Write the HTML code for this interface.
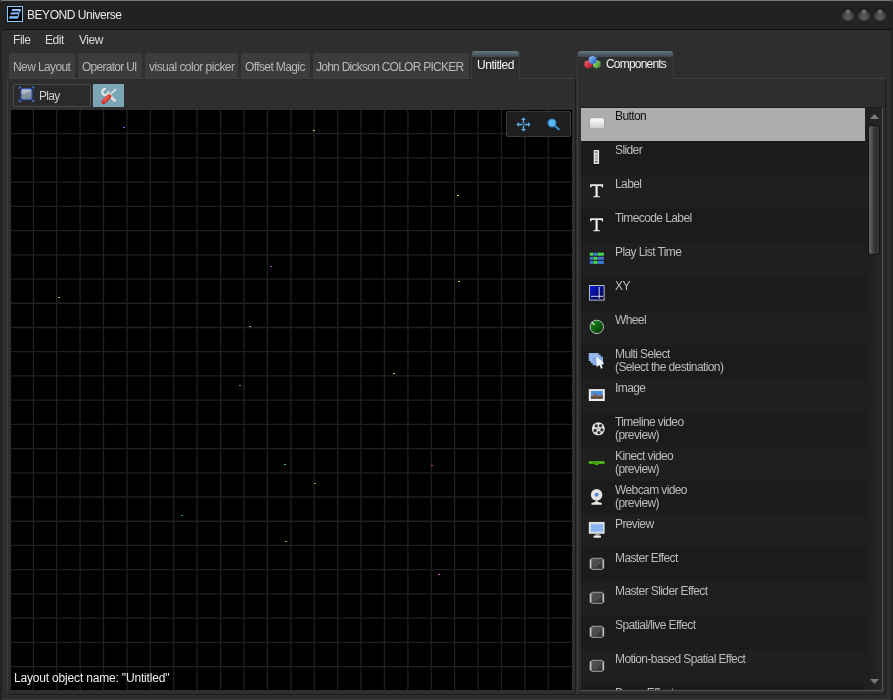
<!DOCTYPE html>
<html><head><meta charset="utf-8"><style>
*{margin:0;padding:0;box-sizing:border-box}
html,body{width:893px;height:700px;overflow:hidden;background:#222;font-family:"Liberation Sans",sans-serif}
.abs{position:absolute}
.sph{position:absolute;top:7px;width:14px;height:14px;border-radius:50%;background:radial-gradient(circle at 50% 32%,#8c8c8c 0,#6a6a6a 1.2px,rgba(50,50,50,0) 3px),radial-gradient(circle at 50% 68%,#5e5e5e 0,#4e4e4e 3.5px,#383838 6px,#1c1c1c 7px)}
.atab{position:absolute;top:51px;height:28px;background:#2e2e2e;border-radius:3px 3px 0 0;border-left:1px solid #3a3a3a;border-right:1px solid #3a3a3a}
.atab .strip{position:absolute;left:0;right:0;top:0;height:6px;border-radius:3px 3px 0 0;background:linear-gradient(#647780,#3c474c)}
</style></head><body>
<div class="abs" style="left:0;top:0;width:893px;height:30px;background:#222;border-top:1px solid #7a7a7a;border-radius:3px 3px 0 0"></div>
<div class="abs" style="left:7px;top:6px;width:16px;height:16px;background:#000;border:1px solid #8cc8f8"></div>
<svg class="abs" style="left:7px;top:6px" width="16" height="16" viewBox="0 0 16 16"><defs><linearGradient id="g3" x1="0" y1="0" x2="0" y2="1"><stop offset="0" stop-color="#b0dcff"/><stop offset="1" stop-color="#5a98e8"/></linearGradient></defs><g fill="url(#g3)"><path d="M5.2 3 H13.4 Q14.5 3.2 14 4.3 L13.6 5.2 H4.6 Z"/><path d="M3.9 6.6 H12.6 L12 8.6 H3.2 Z"/><path d="M2.6 10.2 H11.8 L11 12.8 H1.8 Z"/><path d="M12.3 5 H13.6 L12.6 6.8 H11.5 Z"/><path d="M11.2 8.5 H12.4 L11.8 10.4 H10.6 Z"/></g></svg>
<div class="abs" style="left:26.90px;top:7.60px;font-size:12px;line-height:14.40px;color:#e8e8e8;letter-spacing:-0.451px;white-space:nowrap;will-change:transform;">BEYOND Universe</div>
<div class="sph" style="left:841px"></div>
<div class="sph" style="left:857px"></div>
<div class="sph" style="left:873px"></div>
<div class="abs" style="left:2px;top:29px;width:889px;height:671px;background:#2e2e2e;border-top:1px solid #111;border-bottom:1px solid #3a3a3a"></div>
<div class="abs" style="left:12.80px;top:32.60px;font-size:12px;line-height:14.40px;color:#d8d8d8;letter-spacing:-0.45px;white-space:nowrap;will-change:transform;">File</div>
<div class="abs" style="left:44.50px;top:32.60px;font-size:12px;line-height:14.40px;color:#d8d8d8;letter-spacing:-0.45px;white-space:nowrap;will-change:transform;">Edit</div>
<div class="abs" style="left:78.50px;top:32.60px;font-size:12px;line-height:14.40px;color:#d8d8d8;letter-spacing:-0.45px;white-space:nowrap;will-change:transform;">View</div>

<!-- left panel -->
<div class="abs" style="left:7px;top:78px;width:569px;height:617px;border:1px solid #3e3e3e;border-right-color:#1c1c1c;border-bottom-color:#1c1c1c;border-radius:0 0 3px 3px;background:#2e2e2e"></div>
<div class="abs" style="left:9px;top:53px;width:66.0px;height:25px;background:#3c3c3c;border-radius:3px 3px 0 0"></div><div class="abs" style="left:13.20px;top:59.60px;font-size:12px;line-height:14.40px;color:#b8b8b8;letter-spacing:-0.607px;white-space:nowrap;will-change:transform;">New Layout</div><div class="abs" style="left:78px;top:53px;width:64.0px;height:25px;background:#3c3c3c;border-radius:3px 3px 0 0"></div><div class="abs" style="left:81.90px;top:59.60px;font-size:12px;line-height:14.40px;color:#b8b8b8;letter-spacing:-0.726px;white-space:nowrap;will-change:transform;">Operator UI</div><div class="abs" style="left:145px;top:53px;width:93.0px;height:25px;background:#3c3c3c;border-radius:3px 3px 0 0"></div><div class="abs" style="left:148.60px;top:59.60px;font-size:12px;line-height:14.40px;color:#b8b8b8;letter-spacing:-0.519px;white-space:nowrap;will-change:transform;">visual color picker</div><div class="abs" style="left:241px;top:53px;width:69.0px;height:25px;background:#3c3c3c;border-radius:3px 3px 0 0"></div><div class="abs" style="left:245.30px;top:59.60px;font-size:12px;line-height:14.40px;color:#b8b8b8;letter-spacing:-0.611px;white-space:nowrap;will-change:transform;">Offset Magic</div><div class="abs" style="left:313px;top:53px;width:155.5px;height:25px;background:#3c3c3c;border-radius:3px 3px 0 0"></div><div class="abs" style="left:316.30px;top:59.60px;font-size:12px;line-height:14.40px;color:#b8b8b8;letter-spacing:-0.746px;white-space:nowrap;will-change:transform;">John Dickson COLOR PICKER</div>
<div class="atab" style="left:470.5px;width:49.5px"><div class="strip"></div></div>
<div class="abs" style="left:476.90px;top:58.00px;font-size:12px;line-height:14.40px;color:#f4f4f4;letter-spacing:-0.461px;white-space:nowrap;will-change:transform;">Untitled</div>

<!-- toolbar -->
<div class="abs" style="left:13px;top:84px;width:78px;height:23px;background:#2a2a2a;border:1px solid #4a4a4a;border-radius:2px"></div>
<svg class="abs" style="left:18px;top:86px" width="17" height="17" viewBox="0 0 17 17">
<defs><linearGradient id="gp" x1="0" y1="0" x2="0.3" y2="1"><stop offset="0" stop-color="#c4ccd4"/><stop offset="0.45" stop-color="#a8b2bc"/><stop offset="0.5" stop-color="#8a98a6"/><stop offset="1" stop-color="#7a8896"/></linearGradient></defs>
<path d="M0.7 0.6 H3.6 L0.7 3.5 Z M16.2 0.6 H13.3 L16.2 3.5 Z M0.7 16 H3.6 L0.7 13.1 Z M16.2 16 H13.3 L16.2 13.1 Z" fill="#4a70e0"/>
<rect x="3" y="2.8" width="11" height="11" rx="1.8" fill="url(#gp)" stroke="#3050c8" stroke-width="1.1"/></svg>
<div class="abs" style="left:39.00px;top:88.90px;font-size:12px;line-height:14.40px;color:#cfcfcf;letter-spacing:-0.711px;white-space:nowrap;will-change:transform;">Play</div>
<div class="abs" style="left:93px;top:84px;width:31px;height:23px;background:#7ba6b6"></div>
<svg class="abs" style="left:96px;top:84px" width="26" height="22" viewBox="0 0 26 22"><path d="M12.4 7.3 A3.1 3.1 0 1 1 9.9 4.9" stroke="#e6e6e6" stroke-width="2.2" fill="none"/><path d="M11.8 10 L18.6 16.6" stroke="#dcdcdc" stroke-width="2.8" stroke-linecap="round"/><path d="M19.6 5.4 L13.6 11" stroke="#e4e4e4" stroke-width="1.5" stroke-linecap="round"/><path d="M13 12.6 L7.6 17.8" stroke="#c83028" stroke-width="4.6" stroke-linecap="round"/><path d="M12.6 12.4 L8 16.8" stroke="#e85848" stroke-width="2.6" stroke-linecap="round"/></svg>

<!-- canvas -->
<div class="abs" style="left:11px;top:110px;width:561px;height:580px;background:#000;overflow:hidden">
<svg width="561" height="580" style="position:absolute;left:0;top:0"><path d="M22.30 0V580M45.71 0V580M69.12 0V580M92.53 0V580M115.94 0V580M139.35 0V580M162.76 0V580M186.17 0V580M209.58 0V580M232.99 0V580M256.40 0V580M279.81 0V580M303.22 0V580M326.63 0V580M350.04 0V580M373.45 0V580M396.86 0V580M420.27 0V580M443.68 0V580M467.09 0V580M490.50 0V580M513.91 0V580M537.32 0V580M0 23.72H561M0 47.94H561M0 72.16H561M0 96.38H561M0 120.60H561M0 144.82H561M0 169.04H561M0 193.26H561M0 217.48H561M0 241.70H561M0 265.92H561M0 290.14H561M0 314.36H561M0 338.58H561M0 362.80H561M0 387.02H561M0 411.24H561M0 435.46H561M0 459.68H561M0 483.90H561M0 508.12H561M0 532.34H561M0 556.56H561" stroke="#202020" stroke-width="1.3" fill="none"/></svg>
<div style="position:absolute;left:112px;top:17px;width:2px;height:1px;background:#5a8ad8"></div><div style="position:absolute;left:302px;top:20px;width:2px;height:1px;background:#d8d860"></div><div style="position:absolute;left:259px;top:156px;width:2px;height:1px;background:#b050d0"></div><div style="position:absolute;left:47px;top:187px;width:2px;height:1px;background:#e0a060"></div><div style="position:absolute;left:238px;top:216px;width:2px;height:1px;background:#80c060"></div><div style="position:absolute;left:228px;top:275px;width:2px;height:1px;background:#b050c0"></div><div style="position:absolute;left:382px;top:263px;width:2px;height:1px;background:#a0e060"></div><div style="position:absolute;left:273px;top:354px;width:2px;height:1px;background:#40b0a0"></div><div style="position:absolute;left:420px;top:355px;width:2px;height:1px;background:#e04060"></div><div style="position:absolute;left:303px;top:373px;width:2px;height:1px;background:#60c040"></div><div style="position:absolute;left:170px;top:405px;width:2px;height:1px;background:#40a0c0"></div><div style="position:absolute;left:274px;top:431px;width:2px;height:1px;background:#d0a040"></div><div style="position:absolute;left:427px;top:464px;width:2px;height:1px;background:#d060d0"></div><div style="position:absolute;left:446px;top:85px;width:2px;height:1px;background:#c0e060"></div><div style="position:absolute;left:447px;top:171px;width:2px;height:1px;background:#e0e060"></div>
</div>
<div class="abs" style="left:14.20px;top:670.80px;font-size:12px;line-height:14.40px;color:#eeeeee;letter-spacing:-0.177px;white-space:nowrap;will-change:transform;">Layout object name: "Untitled"</div>
<div class="abs" style="left:506px;top:111px;width:65px;height:26px;background:#1e1e1e;border:1px solid #3a3a3a;border-radius:2px"></div>
<svg class="abs" style="left:516px;top:117px" width="15" height="15" viewBox="0 0 15 15"><g fill="#5ab0e8"><path d="M7.5 0.5 L10 3 H5 Z"/><path d="M7.5 14.5 L10 12 H5 Z"/><path d="M0.5 7.5 L3 5 V10 Z"/><path d="M14.5 7.5 L12 5 V10 Z"/></g><path d="M7.5 2.5 V12.5 M2.5 7.5 H12.5" stroke="#5ab0e8" stroke-width="1.3"/><rect x="6.6" y="6.6" width="1.8" height="1.8" fill="#1e1e1e"/></svg>
<svg class="abs" style="left:547px;top:118px" width="13" height="12" viewBox="0 0 13 12"><circle cx="5" cy="5" r="4" fill="#5ab8f0" stroke="#2a78b8" stroke-width="1.2"/><path d="M8 8 L12 11.5" stroke="#3a88c8" stroke-width="2.2" stroke-linecap="round"/></svg>

<!-- right panel -->
<div class="abs" style="left:577px;top:78px;width:309px;height:617px;border:1px solid #3e3e3e;border-right-color:#1c1c1c;border-bottom-color:#1c1c1c;border-radius:0 0 3px 3px;background:#2e2e2e"></div>
<div class="atab" style="left:577px;width:97px"><div class="strip"></div></div>
<svg class="abs" style="left:583px;top:54px" width="19" height="16" viewBox="0 0 19 16"><defs>
<linearGradient id="cr" x1="0" y1="0" x2="1" y2="1"><stop offset="0" stop-color="#f06070"/><stop offset="1" stop-color="#b01020"/></linearGradient>
<linearGradient id="cg" x1="0" y1="0" x2="1" y2="1"><stop offset="0" stop-color="#c0f080"/><stop offset="1" stop-color="#208020"/></linearGradient>
<linearGradient id="cb" x1="0" y1="0" x2="1" y2="1"><stop offset="0" stop-color="#a0c8f8"/><stop offset="1" stop-color="#1050c0"/></linearGradient></defs>
<path d="M5.3 6 L9.3 7.8 V12.6 L5.3 14.7 L1.5 12.6 V7.8 Z" fill="url(#cr)"/>
<path d="M13.7 6 L17.6 7.8 V12.6 L13.7 14.7 L10 12.6 V7.8 Z" fill="url(#cg)"/>
<path d="M9.6 1.7 L13.6 3.6 V8.4 L9.6 10.3 L5.9 8.4 V3.6 Z" fill="url(#cb)"/></svg>
<div class="abs" style="left:606.20px;top:56.80px;font-size:12px;line-height:14.40px;color:#f0f0f0;letter-spacing:-0.804px;white-space:nowrap;will-change:transform;">Components</div>

<div class="abs" style="left:581px;top:107px;width:302px;height:1px;background:#1c1c1c"></div>
<div class="abs" style="left:581px;top:108px;width:302px;height:583px;background:#222;border-right:1px solid #555;border-bottom:1px solid #555;overflow:hidden">
<div class="abs" style="left:0;top:-0.95px;width:284px;height:34.55px;background:#adadad"></div><div class="abs" style="left:8px;top:7.05px;width:16px;height:16px"><svg width="16" height="16" viewBox="0 0 16 16" style="overflow:visible"><defs><linearGradient id="gb0" x1="0" y1="0" x2="0" y2="1"><stop offset="0" stop-color="#ffffff"/><stop offset="1" stop-color="#cfcfcf"/></linearGradient></defs><rect x="0.4" y="2.7" width="15.2" height="11" rx="2.5" fill="#8f8f8f" opacity="0.5"/><rect x="1" y="3.2" width="14" height="10" rx="2" fill="url(#gb0)"/></svg></div><div class="abs" style="left:33.50px;top:1.15px;font-size:12px;line-height:14.40px;color:#0e0e0e;letter-spacing:-0.6px;white-space:nowrap;will-change:transform;">Button</div><div class="abs" style="left:0;top:33.00px;width:284px;height:34.55px;background:#1b1b1b"></div><div class="abs" style="left:8px;top:41.00px;width:16px;height:16px"><svg width="16" height="16" viewBox="0 0 16 16" style="overflow:visible"><rect x="4.7" y="1" width="5.4" height="14" fill="#e6e6e6"/><rect x="5.8" y="5" width="3.2" height="6" fill="#b8b8b8"/><rect x="6.3" y="2.3" width="2.2" height="1.8" fill="#6a6a6a"/><rect x="6.3" y="11.8" width="2.2" height="1.8" fill="#5a5a5a"/><rect x="4.7" y="15" width="5.4" height="0.8" fill="#000" opacity="0.5"/></svg></div><div class="abs" style="left:33.50px;top:35.10px;font-size:12px;line-height:14.40px;color:#bcbcbc;letter-spacing:-0.6px;white-space:nowrap;will-change:transform;">Slider</div><div class="abs" style="left:0;top:66.95px;width:284px;height:34.55px;background:#1f1f1f"></div><div class="abs" style="left:8px;top:74.95px;width:16px;height:16px"><svg width="16" height="16" viewBox="0 0 16 16" style="overflow:visible"><path d="M1.1 1.3 H14.1 V4.6 H13.2 Q13 3.2 11.8 3.1 H8.7 V12.6 Q8.7 13.3 9.6 13.3 H10.9 V14.2 H4.3 V13.3 H5.6 Q6.5 13.3 6.5 12.6 V3.1 H3.4 Q2.2 3.2 2 4.6 H1.1 Z" fill="#ebebeb"/></svg></div><div class="abs" style="left:33.50px;top:69.05px;font-size:12px;line-height:14.40px;color:#bcbcbc;letter-spacing:-0.6px;white-space:nowrap;will-change:transform;">Label</div><div class="abs" style="left:0;top:100.90px;width:284px;height:34.55px;background:#1b1b1b"></div><div class="abs" style="left:8px;top:108.90px;width:16px;height:16px"><svg width="16" height="16" viewBox="0 0 16 16" style="overflow:visible"><path d="M1.1 1.3 H14.1 V4.6 H13.2 Q13 3.2 11.8 3.1 H8.7 V12.6 Q8.7 13.3 9.6 13.3 H10.9 V14.2 H4.3 V13.3 H5.6 Q6.5 13.3 6.5 12.6 V3.1 H3.4 Q2.2 3.2 2 4.6 H1.1 Z" fill="#ebebeb"/></svg></div><div class="abs" style="left:33.50px;top:103.00px;font-size:12px;line-height:14.40px;color:#bcbcbc;letter-spacing:-0.6px;white-space:nowrap;will-change:transform;">Timecode Label</div><div class="abs" style="left:0;top:134.85px;width:284px;height:34.55px;background:#1f1f1f"></div><div class="abs" style="left:8px;top:142.85px;width:16px;height:16px"><svg width="16" height="16" viewBox="0 0 16 16" style="overflow:visible"><g><rect x="0.8" y="1.7" width="3.7" height="3" fill="#46d846"/><rect x="4.5" y="1.7" width="4" height="3" fill="#3a78d8"/><rect x="8.5" y="1.7" width="6.4" height="3" fill="#46d846"/><rect x="0.8" y="5.8" width="3.7" height="3" fill="#3a78d8"/><rect x="4.5" y="5.8" width="4" height="3" fill="#46d846"/><rect x="8.5" y="5.8" width="6.4" height="3" fill="#3a78d8"/><rect x="0.8" y="9.9" width="3.7" height="3" fill="#3a78d8"/><rect x="4.5" y="9.9" width="4" height="3" fill="#46d846"/><rect x="8.5" y="9.9" width="6.4" height="3" fill="#3a78d8"/></g></svg></div><div class="abs" style="left:33.50px;top:136.95px;font-size:12px;line-height:14.40px;color:#bcbcbc;letter-spacing:-0.6px;white-space:nowrap;will-change:transform;">Play List Time</div><div class="abs" style="left:0;top:168.80px;width:284px;height:34.55px;background:#1b1b1b"></div><div class="abs" style="left:8px;top:176.80px;width:16px;height:16px"><svg width="16" height="16" viewBox="0 0 16 16" style="overflow:visible"><defs><linearGradient id="gx5" x1="0" y1="0" x2="1" y2="1"><stop offset="0" stop-color="#0a1ee0"/><stop offset="1" stop-color="#000030"/></linearGradient></defs><rect x="0.5" y="0.5" width="14.6" height="14.6" fill="url(#gx5)" stroke="#bdbdbd" stroke-width="1"/><path d="M10.2 2 V13.6 M2 11.3 H14" stroke="#d8d8e8" stroke-width="1"/></svg></div><div class="abs" style="left:33.50px;top:170.90px;font-size:12px;line-height:14.40px;color:#bcbcbc;letter-spacing:-0.6px;white-space:nowrap;will-change:transform;">XY</div><div class="abs" style="left:0;top:202.75px;width:284px;height:34.55px;background:#1f1f1f"></div><div class="abs" style="left:8px;top:210.75px;width:16px;height:16px"><svg width="16" height="16" viewBox="0 0 16 16" style="overflow:visible"><defs><linearGradient id="gw6" x1="0" y1="0" x2="1" y2="1"><stop offset="0" stop-color="#1c9a1c"/><stop offset="1" stop-color="#002800"/></linearGradient></defs><circle cx="7.8" cy="7.9" r="6.7" fill="url(#gw6)" stroke="#b8b8b8" stroke-width="1"/><path d="M2.5 3 L5.6 6" stroke="#c8e0c8" stroke-width="1.1"/></svg></div><div class="abs" style="left:33.50px;top:204.85px;font-size:12px;line-height:14.40px;color:#bcbcbc;letter-spacing:-0.6px;white-space:nowrap;will-change:transform;">Wheel</div><div class="abs" style="left:0;top:236.70px;width:284px;height:34.55px;background:#1b1b1b"></div><div class="abs" style="left:8px;top:244.70px;width:16px;height:16px"><svg width="16" height="16" viewBox="0 0 16 16" style="overflow:visible"><rect x="-0.3" y="0" width="10" height="8" fill="#8fb4ee"/><rect x="1.7" y="1.8" width="10" height="8.3" fill="#9cbcf0"/><rect x="3.6" y="3.7" width="10.4" height="8.5" fill="#86aae8"/><path d="M7.4 3.2 L15.5 10.6 L12 10.9 L13.8 15.1 L12 15.8 L10.3 11.7 L7.6 14.2 Z" fill="#f2f2f2"/></svg></div><div class="abs" style="left:33.50px;top:238.80px;font-size:12px;line-height:14.40px;color:#bcbcbc;letter-spacing:-0.6px;white-space:nowrap;will-change:transform;">Multi Select</div><div class="abs" style="left:33.50px;top:251.90px;font-size:12px;line-height:14.40px;color:#bcbcbc;letter-spacing:-0.6px;white-space:nowrap;will-change:transform;">(Select the destination)</div><div class="abs" style="left:0;top:270.65px;width:284px;height:34.55px;background:#1f1f1f"></div><div class="abs" style="left:8px;top:278.65px;width:16px;height:16px"><svg width="16" height="16" viewBox="0 0 16 16" style="overflow:visible"><rect x="-0.2" y="2.1" width="16" height="11.9" fill="#f0f0f0"/><rect x="1.9" y="3.9" width="11.9" height="7.6" fill="#4a8ee0"/><path d="M1.9 11.5 V9.5 L4 9 L5.2 6.5 L6.6 6.8 L8 8.8 L10.5 8.6 L13.8 7.8 V11.5 Z" fill="#8a5a4a"/><rect x="1.9" y="10.3" width="11.9" height="1.2" fill="#3a3a2a"/></svg></div><div class="abs" style="left:33.50px;top:272.75px;font-size:12px;line-height:14.40px;color:#bcbcbc;letter-spacing:-0.6px;white-space:nowrap;will-change:transform;">Image</div><div class="abs" style="left:0;top:304.60px;width:284px;height:34.55px;background:#1b1b1b"></div><div class="abs" style="left:8px;top:312.60px;width:16px;height:16px"><svg width="16" height="16" viewBox="0 0 16 16" style="overflow:visible"><circle cx="9.3" cy="7.8" r="6.5" fill="#e2e2e2"/><circle cx="9.3" cy="7.8" r="1" fill="#9a9a9a"/><g fill="#383838"><circle cx="7.3" cy="4.9" r="1.7"/><circle cx="11.6" cy="4.7" r="1.7"/><circle cx="12.9" cy="8.9" r="1.7"/><circle cx="9.9" cy="11.6" r="1.7"/><circle cx="6.1" cy="9.5" r="1.7"/></g></svg></div><div class="abs" style="left:33.50px;top:306.70px;font-size:12px;line-height:14.40px;color:#bcbcbc;letter-spacing:-0.6px;white-space:nowrap;will-change:transform;">Timeline video</div><div class="abs" style="left:33.50px;top:319.80px;font-size:12px;line-height:14.40px;color:#bcbcbc;letter-spacing:-0.6px;white-space:nowrap;will-change:transform;">(preview)</div><div class="abs" style="left:0;top:338.55px;width:284px;height:34.55px;background:#1f1f1f"></div><div class="abs" style="left:8px;top:346.55px;width:16px;height:16px"><svg width="16" height="16" viewBox="0 0 16 16" style="overflow:visible"><rect x="-0.4" y="6.2" width="16" height="2.6" rx="0.8" fill="#56c40e"/><rect x="5.5" y="8.4" width="4" height="1.6" rx="0.8" fill="#48b00c"/><rect x="3.2" y="7.2" width="1" height="0.8" fill="#2a5a10"/><rect x="5.6" y="7.2" width="1" height="0.8" fill="#2a5a10"/><rect x="8" y="7.2" width="1" height="0.8" fill="#2a5a10"/></svg></div><div class="abs" style="left:33.50px;top:340.65px;font-size:12px;line-height:14.40px;color:#bcbcbc;letter-spacing:-0.6px;white-space:nowrap;will-change:transform;">Kinect video</div><div class="abs" style="left:33.50px;top:353.75px;font-size:12px;line-height:14.40px;color:#bcbcbc;letter-spacing:-0.6px;white-space:nowrap;will-change:transform;">(preview)</div><div class="abs" style="left:0;top:372.50px;width:284px;height:34.55px;background:#1b1b1b"></div><div class="abs" style="left:8px;top:380.50px;width:16px;height:16px"><svg width="16" height="16" viewBox="0 0 16 16" style="overflow:visible"><circle cx="7.6" cy="5.8" r="5.8" fill="#e4e4e4"/><circle cx="7.6" cy="5.8" r="2" fill="#4a88d8"/><path d="M2.5 15.8 V14 Q5 13.5 7.6 12 Q10 13.5 12.8 14 V15.8 Z" fill="#e8e8e8"/><rect x="6.6" y="10.5" width="2" height="2.5" fill="#cfcfcf"/></svg></div><div class="abs" style="left:33.50px;top:374.60px;font-size:12px;line-height:14.40px;color:#bcbcbc;letter-spacing:-0.6px;white-space:nowrap;will-change:transform;">Webcam video</div><div class="abs" style="left:33.50px;top:387.70px;font-size:12px;line-height:14.40px;color:#bcbcbc;letter-spacing:-0.6px;white-space:nowrap;will-change:transform;">(preview)</div><div class="abs" style="left:0;top:406.45px;width:284px;height:34.55px;background:#1f1f1f"></div><div class="abs" style="left:8px;top:414.45px;width:16px;height:16px"><svg width="16" height="16" viewBox="0 0 16 16" style="overflow:visible"><rect x="-0.2" y="-0.1" width="15.8" height="11.9" fill="#d8dcdc"/><rect x="2" y="2.3" width="12" height="7.4" fill="#8ab4f0"/><rect x="6.5" y="11.8" width="4" height="1.8" fill="#a8b0b0"/><rect x="4.5" y="13.5" width="7.5" height="2.2" rx="0.8" fill="#e8ecec"/></svg></div><div class="abs" style="left:33.50px;top:408.55px;font-size:12px;line-height:14.40px;color:#bcbcbc;letter-spacing:-0.6px;white-space:nowrap;will-change:transform;">Preview</div><div class="abs" style="left:0;top:440.40px;width:284px;height:34.55px;background:#1b1b1b"></div><div class="abs" style="left:8px;top:448.40px;width:16px;height:16px"><svg width="16" height="16" viewBox="0 0 16 16" style="overflow:visible"><defs><linearGradient id="ge13" x1="0" y1="0" x2="1" y2="1"><stop offset="0" stop-color="#5e5e5e"/><stop offset="1" stop-color="#2c2c2c"/></linearGradient></defs><path d="M3 1.7 H13 L15.1 3.8 V12 L13 14 H3 L0.8 12 V3.8 Z" fill="#8a8a8a"/><rect x="2.4" y="3" width="11.2" height="9.8" fill="url(#ge13)"/><rect x="0.8" y="3.6" width="1.5" height="8.8" fill="#c4c4c4"/><rect x="13.6" y="3.6" width="1.5" height="8.8" fill="#bcbcbc"/><path d="M5.5 11 L11.5 5" stroke="#8a8a8a" stroke-width="0.5"/></svg></div><div class="abs" style="left:33.50px;top:442.50px;font-size:12px;line-height:14.40px;color:#bcbcbc;letter-spacing:-0.6px;white-space:nowrap;will-change:transform;">Master Effect</div><div class="abs" style="left:0;top:474.35px;width:284px;height:34.55px;background:#1f1f1f"></div><div class="abs" style="left:8px;top:482.35px;width:16px;height:16px"><svg width="16" height="16" viewBox="0 0 16 16" style="overflow:visible"><defs><linearGradient id="ge14" x1="0" y1="0" x2="1" y2="1"><stop offset="0" stop-color="#5e5e5e"/><stop offset="1" stop-color="#2c2c2c"/></linearGradient></defs><path d="M3 1.7 H13 L15.1 3.8 V12 L13 14 H3 L0.8 12 V3.8 Z" fill="#8a8a8a"/><rect x="2.4" y="3" width="11.2" height="9.8" fill="url(#ge14)"/><rect x="0.8" y="3.6" width="1.5" height="8.8" fill="#c4c4c4"/><rect x="13.6" y="3.6" width="1.5" height="8.8" fill="#bcbcbc"/><path d="M5.5 11 L11.5 5" stroke="#8a8a8a" stroke-width="0.5"/></svg></div><div class="abs" style="left:33.50px;top:476.45px;font-size:12px;line-height:14.40px;color:#bcbcbc;letter-spacing:-0.6px;white-space:nowrap;will-change:transform;">Master Slider Effect</div><div class="abs" style="left:0;top:508.30px;width:284px;height:34.55px;background:#1b1b1b"></div><div class="abs" style="left:8px;top:516.30px;width:16px;height:16px"><svg width="16" height="16" viewBox="0 0 16 16" style="overflow:visible"><defs><linearGradient id="ge15" x1="0" y1="0" x2="1" y2="1"><stop offset="0" stop-color="#5e5e5e"/><stop offset="1" stop-color="#2c2c2c"/></linearGradient></defs><path d="M3 1.7 H13 L15.1 3.8 V12 L13 14 H3 L0.8 12 V3.8 Z" fill="#8a8a8a"/><rect x="2.4" y="3" width="11.2" height="9.8" fill="url(#ge15)"/><rect x="0.8" y="3.6" width="1.5" height="8.8" fill="#c4c4c4"/><rect x="13.6" y="3.6" width="1.5" height="8.8" fill="#bcbcbc"/><path d="M5.5 11 L11.5 5" stroke="#8a8a8a" stroke-width="0.5"/></svg></div><div class="abs" style="left:33.50px;top:510.40px;font-size:12px;line-height:14.40px;color:#bcbcbc;letter-spacing:-0.6px;white-space:nowrap;will-change:transform;">Spatial/live Effect</div><div class="abs" style="left:0;top:542.25px;width:284px;height:34.55px;background:#1f1f1f"></div><div class="abs" style="left:8px;top:550.25px;width:16px;height:16px"><svg width="16" height="16" viewBox="0 0 16 16" style="overflow:visible"><defs><linearGradient id="ge16" x1="0" y1="0" x2="1" y2="1"><stop offset="0" stop-color="#5e5e5e"/><stop offset="1" stop-color="#2c2c2c"/></linearGradient></defs><path d="M3 1.7 H13 L15.1 3.8 V12 L13 14 H3 L0.8 12 V3.8 Z" fill="#8a8a8a"/><rect x="2.4" y="3" width="11.2" height="9.8" fill="url(#ge16)"/><rect x="0.8" y="3.6" width="1.5" height="8.8" fill="#c4c4c4"/><rect x="13.6" y="3.6" width="1.5" height="8.8" fill="#bcbcbc"/><path d="M5.5 11 L11.5 5" stroke="#8a8a8a" stroke-width="0.5"/></svg></div><div class="abs" style="left:33.50px;top:544.35px;font-size:12px;line-height:14.40px;color:#bcbcbc;letter-spacing:-0.6px;white-space:nowrap;will-change:transform;">Motion-based Spatial Effect</div><div class="abs" style="left:0;top:576.20px;width:284px;height:34.55px;background:#1b1b1b"></div><div class="abs" style="left:8px;top:584.20px;width:16px;height:16px"><svg width="16" height="16" viewBox="0 0 16 16" style="overflow:visible"><defs><linearGradient id="ge17" x1="0" y1="0" x2="1" y2="1"><stop offset="0" stop-color="#5e5e5e"/><stop offset="1" stop-color="#2c2c2c"/></linearGradient></defs><path d="M3 1.7 H13 L15.1 3.8 V12 L13 14 H3 L0.8 12 V3.8 Z" fill="#8a8a8a"/><rect x="2.4" y="3" width="11.2" height="9.8" fill="url(#ge17)"/><rect x="0.8" y="3.6" width="1.5" height="8.8" fill="#c4c4c4"/><rect x="13.6" y="3.6" width="1.5" height="8.8" fill="#bcbcbc"/><path d="M5.5 11 L11.5 5" stroke="#8a8a8a" stroke-width="0.5"/></svg></div><div class="abs" style="left:33.50px;top:578.30px;font-size:12px;line-height:14.40px;color:#bcbcbc;letter-spacing:-0.6px;white-space:nowrap;will-change:transform;">Beam Effect</div><div class="abs" style="left:0;top:33px;width:284px;height:1px;background:#141414"></div>
<div class="abs" style="left:284px;top:0;width:17px;height:583px;background:linear-gradient(90deg,#1e1e1e,#262626)"></div>
<svg class="abs" style="left:289px;top:5.5px" width="9" height="5" viewBox="0 0 9 5"><path d="M0 5 L4.5 0 L9 5 Z" fill="#7a7a7a"/></svg>
<div class="abs" style="left:287px;top:17px;width:12px;height:130px;border-radius:3px;border:1px solid #111;background:linear-gradient(90deg,#6a6a6a,#3a3a3a 50%,#2e2e2e 60%,#3a3a3a)"></div>
<svg class="abs" style="left:289px;top:571px" width="9" height="5" viewBox="0 0 9 5"><path d="M0 0 L4.5 5 L9 0 Z" fill="#7a7a7a"/></svg>
</div>
</body></html>
